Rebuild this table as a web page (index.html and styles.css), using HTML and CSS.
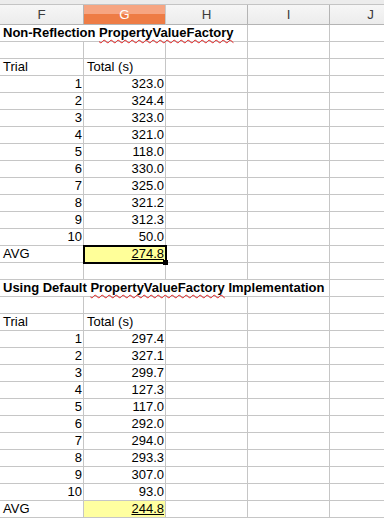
FILE: index.html
```html
<!DOCTYPE html>
<html>
<head>
<meta charset="utf-8">
<link rel="stylesheet" href="styles.css">
</head>
<body>
<div class="sheet">
  <div class="topstrip"></div>
  <div class="heads">
    <div class="hd">F</div>
    <div class="hd sel">G</div>
    <div class="hd">H</div>
    <div class="hd">I</div>
    <div class="hd">J</div>
  </div>
  <div class="grid">
    <div class="c title s3">Non-Reflection <span class="sp">PropertyValueFactory</span></div><div class="c"></div><div class="c"></div>
    <div class="c"></div><div class="c"></div><div class="c"></div><div class="c"></div><div class="c"></div>
    <div class="c">Trial</div><div class="c">Total (s)</div><div class="c"></div><div class="c"></div><div class="c"></div>
    <div class="c n">1</div><div class="c n">323.0</div><div class="c"></div><div class="c"></div><div class="c"></div>
    <div class="c n">2</div><div class="c n">324.4</div><div class="c"></div><div class="c"></div><div class="c"></div>
    <div class="c n">3</div><div class="c n">323.0</div><div class="c"></div><div class="c"></div><div class="c"></div>
    <div class="c n">4</div><div class="c n">321.0</div><div class="c"></div><div class="c"></div><div class="c"></div>
    <div class="c n">5</div><div class="c n">118.0</div><div class="c"></div><div class="c"></div><div class="c"></div>
    <div class="c n">6</div><div class="c n">330.0</div><div class="c"></div><div class="c"></div><div class="c"></div>
    <div class="c n">7</div><div class="c n">325.0</div><div class="c"></div><div class="c"></div><div class="c"></div>
    <div class="c n">8</div><div class="c n">321.2</div><div class="c"></div><div class="c"></div><div class="c"></div>
    <div class="c n">9</div><div class="c n">312.3</div><div class="c"></div><div class="c"></div><div class="c"></div>
    <div class="c n">10</div><div class="c n">50.0</div><div class="c"></div><div class="c"></div><div class="c"></div>
    <div class="c">AVG</div><div class="c n avg cur"><span class="u">274.8</span><span class="handle"></span></div><div class="c"></div><div class="c"></div><div class="c"></div>
    <div class="c"></div><div class="c"></div><div class="c"></div><div class="c"></div><div class="c"></div>
    <div class="c title s4">Using Default <span class="sp">PropertyValueFactory</span> Implementation</div><div class="c"></div>
    <div class="c"></div><div class="c"></div><div class="c"></div><div class="c"></div><div class="c"></div>
    <div class="c">Trial</div><div class="c">Total (s)</div><div class="c"></div><div class="c"></div><div class="c"></div>
    <div class="c n">1</div><div class="c n">297.4</div><div class="c"></div><div class="c"></div><div class="c"></div>
    <div class="c n">2</div><div class="c n">327.1</div><div class="c"></div><div class="c"></div><div class="c"></div>
    <div class="c n">3</div><div class="c n">299.7</div><div class="c"></div><div class="c"></div><div class="c"></div>
    <div class="c n">4</div><div class="c n">127.3</div><div class="c"></div><div class="c"></div><div class="c"></div>
    <div class="c n">5</div><div class="c n">117.0</div><div class="c"></div><div class="c"></div><div class="c"></div>
    <div class="c n">6</div><div class="c n">292.0</div><div class="c"></div><div class="c"></div><div class="c"></div>
    <div class="c n">7</div><div class="c n">294.0</div><div class="c"></div><div class="c"></div><div class="c"></div>
    <div class="c n">8</div><div class="c n">293.3</div><div class="c"></div><div class="c"></div><div class="c"></div>
    <div class="c n">9</div><div class="c n">307.0</div><div class="c"></div><div class="c"></div><div class="c"></div>
    <div class="c n">10</div><div class="c n">93.0</div><div class="c"></div><div class="c"></div><div class="c"></div>
    <div class="c">AVG</div><div class="c n avg2"><span class="u">244.8</span></div><div class="c"></div><div class="c"></div><div class="c"></div>
  </div>
</div>
</body>
</html>
```

FILE: styles.css
```css
html, body {
  margin: 0;
  padding: 0;
  background: #ffffff;
}
.sheet {
  width: 384px;
  height: 519px;
  overflow: hidden;
  font-family: "Liberation Sans", Arial, sans-serif;
  font-size: 13px;
  color: #000;
}
.topstrip {
  height: 4px;
  background: #ececec;
  border-bottom: 1px solid #c4c4c4;
}
.heads {
  display: grid;
  grid-template-columns: 84px 82px 82px 82px 82px;
  height: 20px;
  width: 412px;
}
.hd {
  box-sizing: border-box;
  border-right: 1px solid #b4b4b4;
  border-bottom: 1px solid #b4b4b4;
  background: linear-gradient(#f6f6f6, #ececec);
  color: #3c3c3c;
  text-align: center;
  line-height: 19px;
  font-size: 13.33px;
}
.hd.sel {
  background: linear-gradient(#f6a582 0, #f6a582 50%, #ee7c45 50%, #ee7c45 100%);
  color: #ffffff;
  border-right-color: #c9c9c9;
}
.grid {
  display: grid;
  grid-template-columns: 84px 82px 82px 82px 82px;
  grid-auto-rows: 17px;
  width: 412px;
}
.c {
  box-sizing: border-box;
  border-right: 1px solid #c6c6c6;
  border-bottom: 1px solid #c6c6c6;
  line-height: 16px;
  padding: 0 1px 0 3px;
  white-space: nowrap;
  position: relative;
}
.n {
  text-align: right;
  padding-left: 0;
}
.title {
  font-weight: bold;
}
.s3 {
  grid-column: span 3;
}
.s4 {
  grid-column: span 4;
}
.sp {
  text-decoration: underline wavy #e01b1b;
  text-decoration-thickness: 1px;
  text-underline-offset: 2px;
  text-decoration-skip-ink: none;
}
.u {
  text-decoration: underline;
}
.avg {
  background: #ffff99;
}
.avg2 {
  background: #ffffa0;
}
.cur {
  outline: 2px solid #000;
  outline-offset: -1px;
  z-index: 2;
}
.handle {
  position: absolute;
  right: -3px;
  bottom: -3px;
  width: 5px;
  height: 5px;
  background: #000;
}
```
